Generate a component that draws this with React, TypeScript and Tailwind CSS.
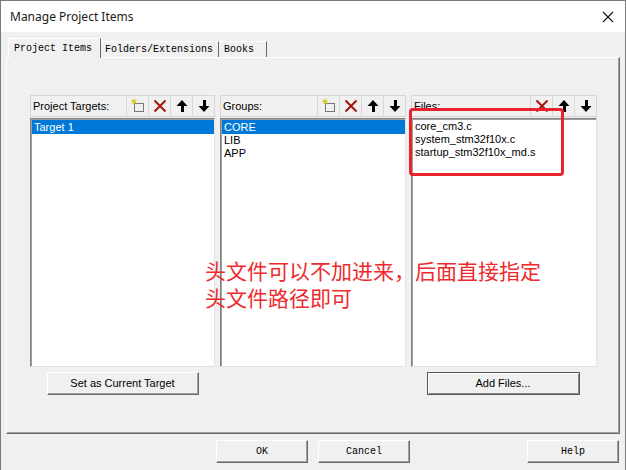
import React from "react";

const sans = { fontFamily: '"Liberation Sans", Arial, sans-serif' };
const mono = { fontFamily: '"Liberation Mono", "Courier New", monospace' };

function NewIcon() {
  return (
    <svg width="16" height="16" viewBox="0 0 16 16">
      <rect x="4.5" y="5.5" width="9" height="8" fill="none" stroke="#000" strokeWidth="1" strokeDasharray="1 1" />
      <path d="M4 1 L4 6 M1.5 3.5 L6.5 3.5 M2 1.5 L6 5.5 M6 1.5 L2 5.5" stroke="#d6c800" strokeWidth="1" />
    </svg>
  );
}

function DelIcon() {
  return (
    <svg width="16" height="16" viewBox="0 0 16 16">
      <path d="M2.5 2.5 L13.5 13.5 M13.5 2.5 L2.5 13.5" stroke="#a31515" strokeWidth="2" />
    </svg>
  );
}

function UpIcon() {
  return (
    <svg width="16" height="16" viewBox="0 0 16 16">
      <path d="M8 2 L13.5 8 L10 8 L10 14 L7 14 L7 8 L2.5 8 Z" fill="#000" />
    </svg>
  );
}

function DownIcon() {
  return (
    <svg width="16" height="16" viewBox="0 0 16 16">
      <path d="M8 14 L13.5 8 L10 8 L10 2 L7 2 L7 8 L2.5 8 Z" fill="#000" />
    </svg>
  );
}

function HeaderBtn({ children }: { children: React.ReactNode }) {
  return (
    <div className="w-[22px] h-full flex items-center justify-center border-l border-[#d8d8d8]">
      {children}
    </div>
  );
}

function Column({
  label,
  items,
  selected,
  showNew,
  width,
}: {
  label: string;
  items: string[];
  selected: number;
  showNew: boolean;
  width: string;
}) {
  return (
    <div className={`flex flex-col ${width}`}>
      <div className="h-[22px] flex items-stretch border border-[#d6d6d6] bg-[#f0f0f0]">
        <div className="flex-1 flex items-center pl-[2px] text-[11px] text-black" style={sans}>
          {label}
        </div>
        {showNew && (
          <HeaderBtn>
            <NewIcon />
          </HeaderBtn>
        )}
        <HeaderBtn>
          <DelIcon />
        </HeaderBtn>
        <HeaderBtn>
          <UpIcon />
        </HeaderBtn>
        <HeaderBtn>
          <DownIcon />
        </HeaderBtn>
      </div>
      <div className="mt-[1px] h-[249px] bg-white border-t border-l border-[#828282] border-r border-b border-r-[#e3e3e3] border-b-[#e3e3e3] shadow-[inset_1px_1px_0_#a0a0a0] pt-[1px] pl-[1px]">
        {items.map((it, i) => (
          <div
            key={it}
            className={`h-[13px] leading-[13px] pl-[2px] text-[11px] ${
              i === selected ? "bg-[#0078d7] text-white h-[14px] leading-[14px]" : "text-black"
            }`}
            style={sans}
          >
            {it}
          </div>
        ))}
      </div>
    </div>
  );
}

function Btn3D({ children, className, style }: { children: React.ReactNode; className?: string; style?: React.CSSProperties }) {
  return (
    <div
      className={`h-[23px] flex items-center justify-center bg-[#f0f0f0] border border-t-white border-l-white border-r-[#696969] border-b-[#696969] shadow-[inset_-1px_-1px_0_#a0a0a0] text-black ${className ?? ""}`}
      style={style}
    >
      {children}
    </div>
  );
}

export default function App() {
  return (
    <div className="relative w-[626px] h-[470px] bg-[#f0f0f0] border-l border-r border-t border-[#7a7a7a] overflow-hidden">
      {/* Title bar */}
      <div className="h-[31px] bg-white flex items-center pl-[9px] pr-[8px]">
        <span className="text-[12px] text-[#1a1a1a]" style={{ fontFamily: '"Noto Sans", "Open Sans", sans-serif' }}>
          Manage Project Items
        </span>
        <div className="ml-auto mr-[2px] w-[14px] h-[14px] flex items-center justify-center">
          <svg width="12" height="12" viewBox="0 0 12 12">
            <path d="M1 1 L11 11 M11 1 L1 11" stroke="#111" strokeWidth="1.1" />
          </svg>
        </div>
      </div>

      <div className="px-[5px]">
        {/* Tabs */}
        <div className="mt-[6px] h-[19px] flex items-end pl-[2px]">
          <div
            className="relative z-10 h-[20px] -mb-px w-[93px] bg-[#f0f0f0] border-t border-l border-white border-r border-r-[#696969] flex items-center pl-[5px] text-[10px] text-black"
            style={mono}
          >
            Project Items
          </div>
          <div
            className="h-[16px] w-[118px] border-t border-white border-r border-r-[#696969] flex items-center pl-[4px] text-[10px] text-black"
            style={mono}
          >
            Folders/Extensions
          </div>
          <div
            className="h-[16px] w-[48px] border-t border-white border-r border-r-[#696969] flex items-center pl-[5px] text-[10px] text-black"
            style={mono}
          >
            Books
          </div>
        </div>

        {/* Panel */}
        <div className="h-[377px] border border-t-white border-l-white border-r-[#696969] border-b-[#696969] shadow-[inset_-1px_-1px_0_#a0a0a0] pl-[23px] pt-[37px]">
          <div className="flex gap-[5px]">
            <div className="flex flex-col w-[185px]">
              <Column label="Project Targets:" items={["Target 1"]} selected={0} showNew width="w-[185px]" />
              <div className="mt-[5px] flex justify-center">
                <Btn3D className="w-[152px] text-[11px]" style={sans}>
                  Set as Current Target
                </Btn3D>
              </div>
            </div>
            <div className="flex flex-col w-[186px]">
              <Column label="Groups:" items={["CORE", "LIB", "APP"]} selected={0} showNew width="w-[186px]" />
            </div>
            <div className="flex flex-col w-[186px]">
              <Column
                label="Files:"
                items={["core_cm3.c", "system_stm32f10x.c", "startup_stm32f10x_md.s"]}
                selected={-1}
                showNew={false}
                width="w-[186px]"
              />
              <div className="mt-[5px] flex justify-center pr-[2px]">
                <div
                  className="w-[153px] h-[23px] flex items-center justify-center bg-[#f0f0f0] border border-[#555] shadow-[inset_1px_1px_0_#fff,inset_-1px_-1px_0_#8a8a8a] text-[11px] text-black"
                  style={sans}
                >
                  Add Files...
                </div>
              </div>
            </div>
          </div>
        </div>
      </div>

      {/* Bottom buttons */}
      <div className="mt-[6px] flex">
        <Btn3D className="ml-[215px] w-[92px] text-[10px]" style={mono}>
          OK
        </Btn3D>
        <Btn3D className="ml-[10px] w-[92px] text-[10px]" style={mono}>
          Cancel
        </Btn3D>
        <Btn3D className="ml-auto mr-[6px] w-[92px] text-[10px]" style={mono}>
          Help
        </Btn3D>
      </div>

      {/* Annotations */}
      <div className="absolute left-[408px] top-[107px] w-[155px] h-[68px] border-[3px] border-[#e8232b] rounded-[4px]" />
      <div
        className="absolute left-[204px] top-[256px] text-[21px] leading-[27px] text-[#ee2a2e] whitespace-nowrap"
        style={{ fontFamily: '"Noto Sans CJK SC", "Noto Sans", sans-serif' }}
      >
        <div>头文件可以不加进来，后面直接指定</div>
        <div>头文件路径即可</div>
      </div>
    </div>
  );
}
